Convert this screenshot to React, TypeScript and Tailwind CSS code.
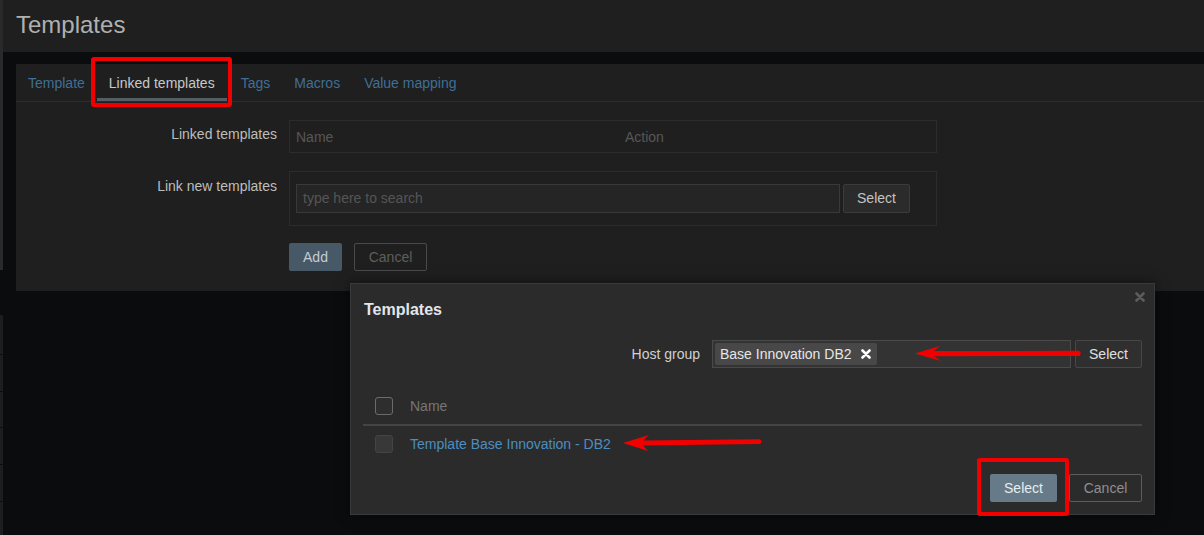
import React from "react";

function Sidebar() {
  return (
    <aside className="flex w-[3px] shrink-0 flex-col">
      <div className="h-[270px] bg-[#2a2a2a]" />
      <div className="h-[45px] bg-[#0b0c0e]" />
      <div className="h-[40px] border-b border-[#0b0c0e] bg-[#1d1e20]" />
      <div className="h-[37px] border-b border-[#0b0c0e] bg-[#1d1e20]" />
      <div className="h-[36px] border-b border-[#0b0c0e] bg-[#1d1e20]" />
      <div className="h-[37px] border-b border-[#0b0c0e] bg-[#1d1e20]" />
      <div className="h-[37px] border-b border-[#0b0c0e] bg-[#1d1e20]" />
      <div className="flex-1 bg-[#1d1e20]" />
    </aside>
  );
}

function XIcon({ className }: { className?: string }) {
  return (
    <svg viewBox="0 0 10 10" className={className} fill="none">
      <path d="M1.5 1.5 L8.5 8.5 M8.5 1.5 L1.5 8.5" stroke="currentColor" strokeWidth="2.6" strokeLinecap="round" />
    </svg>
  );
}

const tabs = ["Template", "Linked templates", "Tags", "Macros", "Value mapping"];

function Tabs() {
  return (
    <div className="flex h-[38px] border-b border-[#2c2c2c]">
      {tabs.map((t, i) => {
        const active = t === "Linked templates";
        return (
          <div
            key={t}
            className={
              active
                ? "flex h-[37px] items-center px-[12px] pt-[1px] text-[#c8c8c8] shadow-[inset_0_-3px_0_#555d66]"
                : i === 2
                ? "ml-[2px] flex h-[37px] items-center px-[12px] pt-[1px] text-[#3f6f96]"
                : "flex h-[37px] items-center px-[12px] pt-[1px] text-[#3f6f96]"
            }
          >
            {t}
          </div>
        );
      })}
    </div>
  );
}

function FormPanel() {
  return (
    <section className="ml-[13px] mt-[12px] h-[227px] bg-[#1f1f1f]">
      <Tabs />
      <div className="grid grid-cols-[261px_648px] gap-x-[12px] pt-[18px]">
        <div className="pt-[6px] text-right leading-[16px] text-[#bdbdbd]">Linked templates</div>
        <div className="flex h-[33px] items-center border border-[#2c2c2c] pt-[1px] text-[#575757]">
          <span className="w-[335px] pl-[6px]">Name</span>
          <span>Action</span>
        </div>

        <div className="mt-[18px] pt-[7px] text-right leading-[16px] text-[#bdbdbd]">Link new templates</div>
        <div className="mt-[18px] flex h-[55px] items-center gap-[3px] border border-[#2c2c2c] pl-[6px]">
          <div className="flex h-[29px] w-[544px] items-center border border-[#393939] bg-[#252525] pl-[6px] text-[#555555]">
            type here to search
          </div>
          <button className="flex h-[29px] w-[67px] items-center justify-center rounded-[2px] border border-[#3b3b3b] bg-[#2b2b2b] text-[#c3c3c3]">
            Select
          </button>
        </div>

        <div className="mt-[17px]" />
        <div className="mt-[17px] flex gap-[12px]">
          <button className="flex h-[28px] w-[53px] items-center justify-center rounded-[2px] bg-[#475866] pt-[1px] text-[#c4ccd2]">
            Add
          </button>
          <button className="flex h-[28px] w-[73px] items-center justify-center rounded-[2px] border border-[#4a4a4a] pt-[1px] text-[#5e5e5e]">
            Cancel
          </button>
        </div>
      </div>
    </section>
  );
}

function Modal() {
  return (
    <div className="absolute left-[350px] top-[283px] flex h-[232px] w-[805px] flex-col border border-[#3a3a3a] bg-[#2b2b2b] px-[12px] pt-[16px] shadow-[0_0_12px_rgba(0,0,0,0.5)]">
      <XIcon className="absolute right-[9px] top-[8px] h-[10px] w-[10px] text-[#5c5c5c]" />
      <h2 className="pl-[1px] text-[16px] font-bold leading-[20px] text-[#e2e6ea]">Templates</h2>

      <div className="mt-[20px] flex items-center justify-end">
        <span className="mr-[12px] text-[#d0d0d0]">Host group</span>
        <div className="flex h-[28px] w-[359px] items-center border border-[#4a4a4a] bg-[#333333] pl-[2px]">
          <span className="flex h-[22px] items-center gap-[9px] rounded-[2px] bg-[#484848] pl-[5px] pr-[6px] text-[#e6e6e6]">
            Base Innovation DB2
            <XIcon className="h-[10px] w-[10px] text-white" />
          </span>
        </div>
        <button className="ml-[4px] flex h-[28px] w-[67px] items-center justify-center rounded-[2px] border border-[#474747] bg-[#2f2f2f] text-[#e0e0e0]">
          Select
        </button>
      </div>

      <div className="mt-[20px]">
        <div className="flex h-[38px] items-center border-b-2 border-[#444444] pl-[12px]">
          <span className="h-[18px] w-[18px] rounded-[3px] border border-[#6b6b6b] bg-[#2e2e2e]" />
          <span className="ml-[17px] text-[#767676]">Name</span>
        </div>
        <div className="flex h-[35px] items-center pl-[12px]">
          <span className="h-[18px] w-[18px] rounded-[3px] border border-[#444444] bg-[#383838]" />
          <span className="ml-[17px] pt-[1px] text-[#4b8ec0]">Template Base Innovation - DB2</span>
        </div>
      </div>

      <div className="mt-auto flex justify-end gap-[12px] pb-[12px]">
        <button className="flex h-[28px] w-[67px] items-center justify-center rounded-[2px] bg-[#667b87] text-[#e6ecf0]">
          Select
        </button>
        <button className="flex h-[28px] w-[73px] items-center justify-center rounded-[2px] border border-[#5c5c5c] text-[#8f8f8f]">
          Cancel
        </button>
      </div>
    </div>
  );
}

function Annotations() {
  return (
    <>
      <div className="pointer-events-none absolute left-[91px] top-[57px] h-[50px] w-[141px] rounded-[3px] border-[4px] border-[#f20000]" />
      <div className="pointer-events-none absolute left-[977px] top-[458px] h-[58px] w-[92px] rounded-[3px] border-[4px] border-[#f20000]" />
      <svg className="pointer-events-none absolute left-0 top-0 h-[535px] w-[1204px]" viewBox="0 0 1204 535">
        <g fill="#f20000">
          <polygon points="915,353.5 940,346 934,351 1078,350.8 1078,356 934,356.2 941,361" />
          <circle cx="1078" cy="353.4" r="2.6" />
          <polygon points="623,443 649,435 643,440.6 759,439.3 759,444.1 643,445.6 648,451" />
          <circle cx="759" cy="441.7" r="2.4" />
        </g>
      </svg>
    </>
  );
}

export default function App() {
  return (
    <div className="relative flex h-[535px] w-[1204px] overflow-hidden bg-[#0b0c0e] font-['Liberation_Sans',Arial,sans-serif] text-[14px]">
      <Sidebar />
      <main className="flex flex-1 flex-col">
        <header className="h-[52px] bg-[#1f1f1f] pl-[13px] pt-[13px]">
          <h1 className="text-[24px] leading-none text-[#b0b0b0]">Templates</h1>
        </header>
        <FormPanel />
      </main>
      <Modal />
      <Annotations />
    </div>
  );
}
